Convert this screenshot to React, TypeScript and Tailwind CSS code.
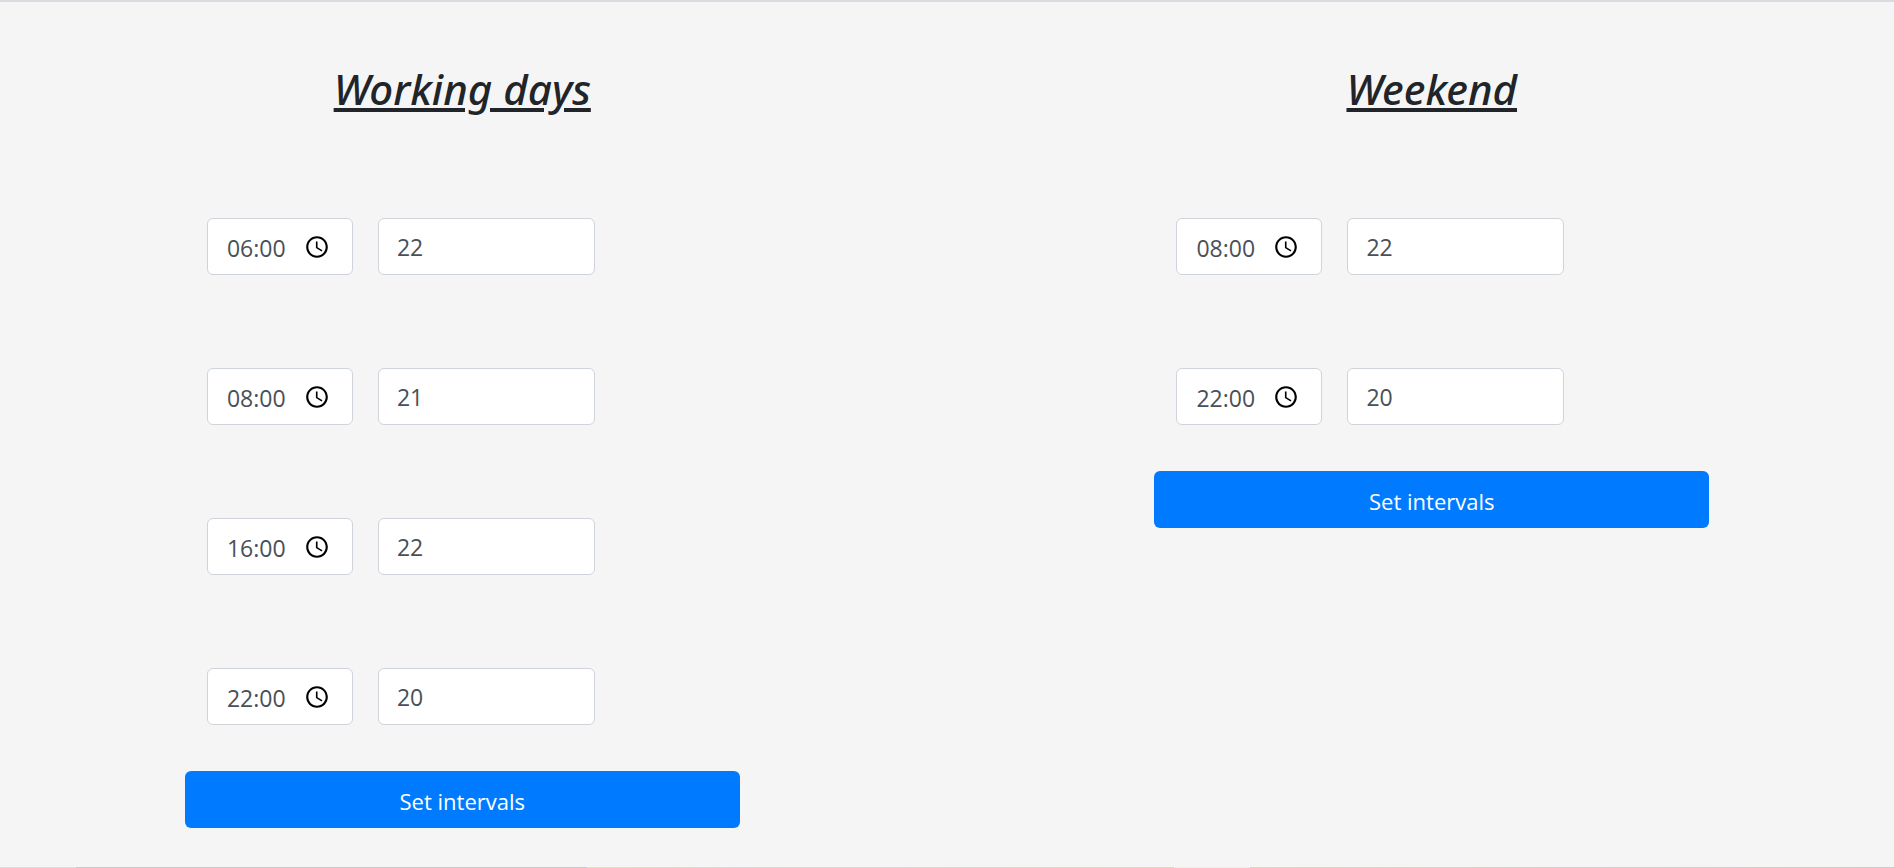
import { useState } from "react";

type Interval = { time: string; temperature: number };

const workingDays: Interval[] = [
  { time: "06:00", temperature: 22 },
  { time: "08:00", temperature: 21 },
  { time: "16:00", temperature: 22 },
  { time: "22:00", temperature: 20 },
];

const weekend: Interval[] = [
  { time: "08:00", temperature: 22 },
  { time: "22:00", temperature: 20 },
];

function ClockIcon() {
  return (
    <svg viewBox="0 0 24 24" className="size-[26px]" fill="currentColor" aria-hidden="true">
      <path d="M11.99 2C6.47 2 2 6.48 2 12s4.47 10 9.99 10C17.52 22 22 17.52 22 12S17.52 2 11.99 2zM12 20c-4.42 0-8-3.58-8-8s3.58-8 8-8 8 3.58 8 8-3.58 8-8 8zm.5-13H11v6l5.25 3.15.75-1.23-4.5-2.67z" />
    </svg>
  );
}

function IntervalRow({ interval, name }: { interval: Interval; name: string }) {
  const [time, setTime] = useState(interval.time);
  const [temperature, setTemperature] = useState(String(interval.temperature));
  return (
    <div className="flex gap-[25px] px-[22px]">
      <div className="flex h-[57px] w-[146px] items-center rounded-md border border-[#ced4da] bg-white pl-[19px]">
        <input
          type="text"
          inputMode="numeric"
          aria-label={`${name} start time`}
          value={time}
          onChange={(e) => setTime(e.target.value)}
          className="w-[77px] bg-transparent pt-1 text-[23px] text-[#495057] outline-none"
        />
        <button type="button" aria-label={`${name} choose time`} className="text-black">
          <ClockIcon />
        </button>
      </div>
      <input
        type="number"
        aria-label={`${name} temperature`}
        value={temperature}
        onChange={(e) => setTemperature(e.target.value)}
        className="h-[57px] w-[217px] rounded-md border border-[#ced4da] bg-white px-[18px] text-[23px] text-[#495057] outline-none"
      />
    </div>
  );
}

function Schedule({ title, intervals }: { title: string; intervals: Interval[] }) {
  return (
    <form className="mx-auto w-3/5" onSubmit={(e) => e.preventDefault()}>
      <h2 className="text-center font-['Noto_Sans','Open_Sans',sans-serif] text-[42px] leading-[46px] font-medium italic underline">
        {title}
      </h2>
      <div className="mt-[106px] flex flex-col gap-[93px]">
        {intervals.map((interval, i) => (
          <IntervalRow key={i} interval={interval} name={`${title} ${i + 1}`} />
        ))}
      </div>
      <button
        type="submit"
        className="mt-[46px] h-[57px] w-full rounded-md bg-[#007bff] pt-1 text-[22px] text-white"
      >
        Set intervals
      </button>
    </form>
  );
}

export default function App() {
  return (
    <main className="min-h-screen border-t-2 border-[#dadae0] bg-[#f5f5f5] font-['Open_Sans','Noto_Sans',sans-serif] text-[#212529]">
      <div className="grid grid-cols-2 gap-[45px] pt-16 pb-[39px]">
        <Schedule title="Working days" intervals={workingDays} />
        <Schedule title="Weekend" intervals={weekend} />
      </div>
      <div className="h-px bg-[linear-gradient(to_right,#dedede_4%,#c8c8c8_4%,#c8c8c8_31%,#dfe3bf_31%,#d9d9d6_40%,#e0d8c4_62%,#f0eee6_62%,#f0eee6_66%,#dcd6c4_66%,#cccccc_100%)]" />
    </main>
  );
}
